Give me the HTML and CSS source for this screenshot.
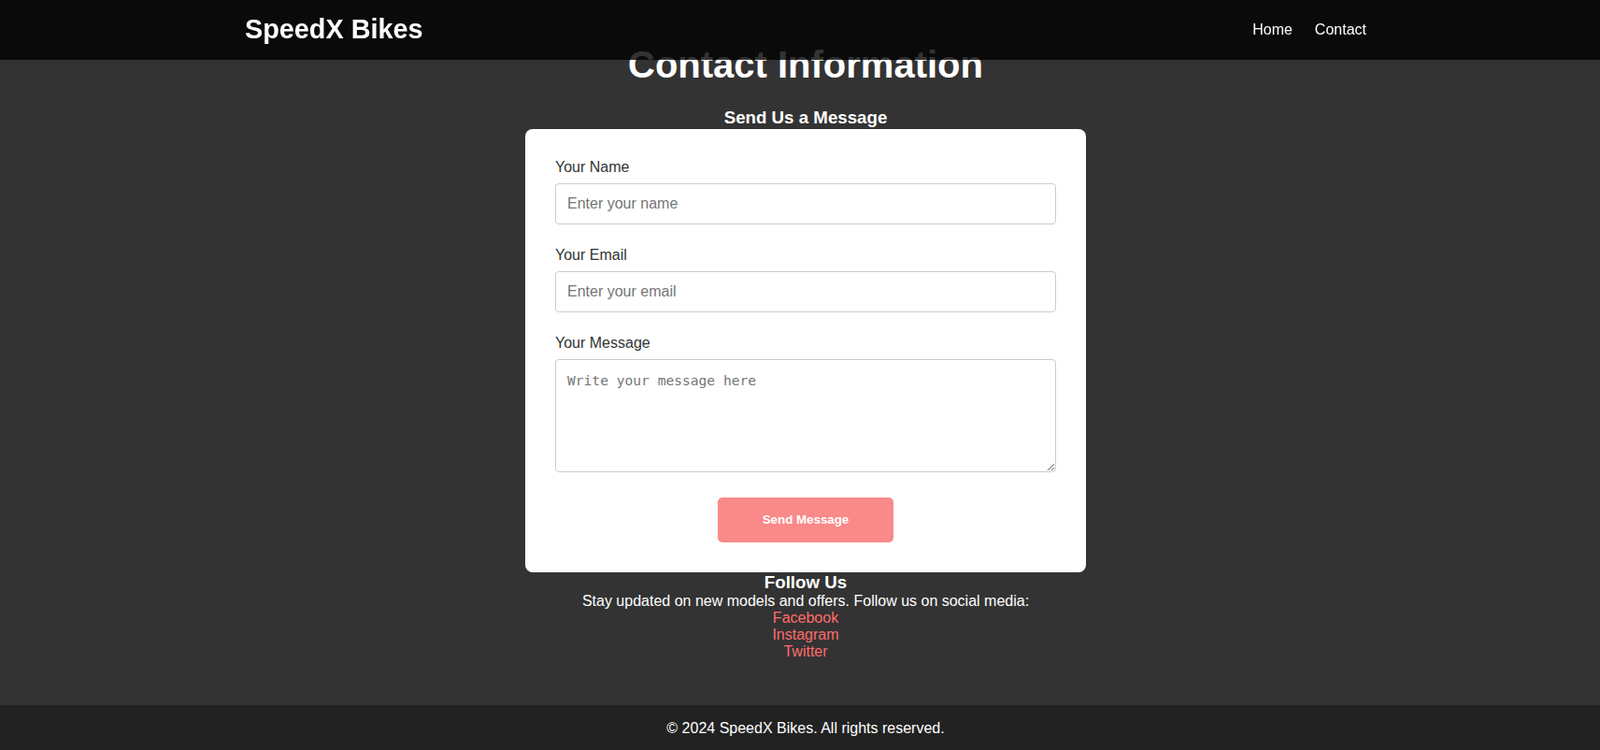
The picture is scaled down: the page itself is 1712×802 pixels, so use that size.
FILE: index.html
```html
<!DOCTYPE html>
<html lang="en">
<head>
<meta charset="UTF-8">
<title>Contact - SpeedX Bikes</title>
<link rel="stylesheet" href="styles.css">
</head>
<body>
<header class="site-header">
  <div class="header-inner">
    <div class="logo">SpeedX Bikes</div>
    <nav class="nav">
      <a href="#">Home</a>
      <a href="#">Contact</a>
    </nav>
  </div>
</header>

<main class="main">
  <h2 class="page-title">Contact Information</h2>
  <h3 class="section-title">Send Us a Message</h3>
  <form class="card">
    <div class="form-group">
      <label for="name">Your Name</label>
      <input id="name" type="text" placeholder="Enter your name">
    </div>
    <div class="form-group">
      <label for="email">Your Email</label>
      <input id="email" type="email" placeholder="Enter your email">
    </div>
    <div class="form-group">
      <label for="message">Your Message</label>
      <textarea id="message" placeholder="Write your message here"></textarea>
    </div>
    <div class="actions">
      <button type="button" class="btn">Send Message</button>
    </div>
  </form>

  <section class="social">
    <h3 class="social-title">Follow Us</h3>
    <p class="social-text">Stay updated on new models and offers. Follow us on social media:</p>
    <a href="#" class="social-link">Facebook</a>
    <a href="#" class="social-link">Instagram</a>
    <a href="#" class="social-link">Twitter</a>
  </section>
</main>

<footer class="site-footer">
  <p>© 2024 SpeedX Bikes. All rights reserved.</p>
</footer>
</body>
</html>
```

FILE: styles.css
```css
* {
  box-sizing: border-box;
}

html, body {
  margin: 0;
  padding: 0;
}

body {
  font-family: "Liberation Sans", Arial, sans-serif;
  background: #333333;
  color: #ffffff;
  font-size: 16px;
}

.site-header {
  position: fixed;
  top: 0;
  left: 0;
  right: 0;
  height: 64px;
  background: rgba(0, 0, 0, 0.8);
  z-index: 10;
}

.header-inner {
  max-width: 1212px;
  height: 100%;
  margin: 0 auto;
  padding-left: 12px;
  display: flex;
  align-items: center;
  justify-content: space-between;
}

.logo {
  font-size: 28.8px;
  font-weight: bold;
  color: #ffffff;
  margin-top: -2px;
}

.nav {
  display: flex;
  gap: 24px;
  margin-top: -1px;
}

.nav a {
  color: #ffffff;
  text-decoration: none;
  font-size: 16px;
}

.main {
  padding: 46px 0 48px 12px;
  text-align: center;
}

.page-title {
  font-size: 40px;
  font-weight: bold;
  margin: 0 0 23px;
  line-height: 46px;
}

.section-title {
  font-size: 18.72px;
  font-weight: bold;
  margin: 0 0 0.5px;
}

.card {
  width: 600px;
  margin: 0 auto;
  background: #ffffff;
  border-radius: 8px;
  padding: 32px;
  text-align: left;
  color: #333333;
}

.form-group {
  margin-bottom: 24px;
}

.form-group label {
  display: block;
  margin-bottom: 8px;
  font-size: 16px;
  color: #333333;
}

.form-group input,
.form-group textarea {
  display: block;
  width: 100%;
  border: 1px solid #cccccc;
  border-radius: 4px;
  padding: 12px;
  font-size: 16px;
  color: #333333;
  background: #ffffff;
}

.form-group input {
  font-family: "Liberation Sans", Arial, sans-serif;
}

.form-group textarea {
  font-family: "DejaVu Sans Mono", "Liberation Mono", monospace;
  font-size: 14.6px;
  height: 121px;
  padding-top: 13px;
}

.form-group input::placeholder {
  color: #757575;
}

.form-group textarea::placeholder {
  color: #757575;
}

.actions {
  text-align: center;
  padding-top: 3px;
}

.btn {
  background: #fa8989;
  color: #ffffff;
  border: none;
  border-radius: 5px;
  padding: 16.5px 48px;
  font-family: "Liberation Sans", Arial, sans-serif;
  font-size: 13.33px;
  font-weight: bold;
  cursor: pointer;
}

.social-title {
  font-size: 18.72px;
  font-weight: bold;
  margin: 0;
}

.social-text {
  margin: 0;
  font-size: 16px;
}

.social-link {
  display: block;
  color: #ff6b6b;
  text-decoration: none;
  font-size: 16px;
}

.site-footer {
  background: #222222;
  padding: 16px 0 16px 12px;
  text-align: center;
}

.site-footer p {
  margin: 0;
  font-size: 16px;
  color: #ffffff;
}
```
